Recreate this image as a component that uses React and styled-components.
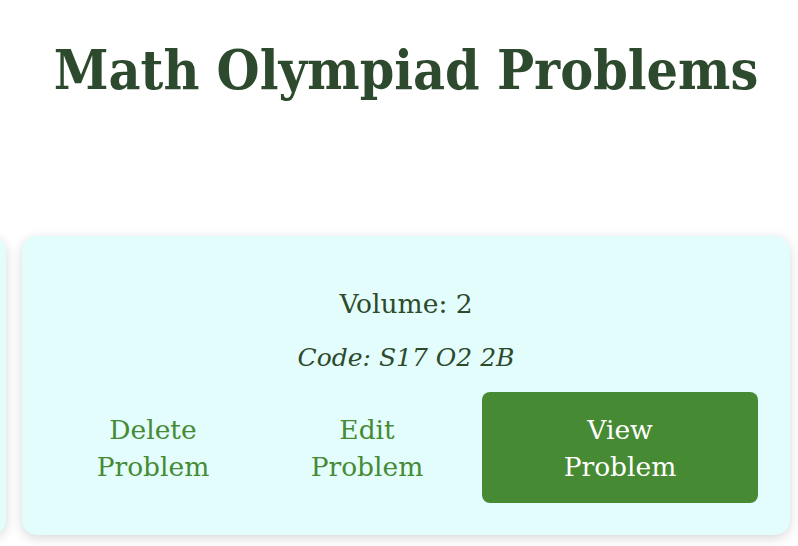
import React from 'react';
import styled, { createGlobalStyle } from 'styled-components';

const GlobalStyle = createGlobalStyle`
  html, body {
    margin: 0;
    padding: 0;
    background: #ffffff;
    overflow: hidden;
  }
  body {
    font-family: "DejaVu Serif", "Liberation Serif", serif;
  }
`;

const Page = styled.div`
  width: 798px;
  height: 546px;
  padding-left: 14px;
  box-sizing: border-box;
  overflow: hidden;
`;

const Title = styled.h1`
  margin: 0;
  padding-top: 38px;
  height: 236px;
  box-sizing: border-box;
  text-align: center;
  font-family: "DejaVu Serif", serif;
  font-stretch: condensed;
  font-weight: 700;
  font-size: 55px;
  line-height: 64px;
  color: #2e4a2e;
  white-space: nowrap;
`;

const Track = styled.div`
  display: flex;
  justify-content: center;
  gap: 16px;
  padding-bottom: 12px;
`;

const Card = styled.div`
  flex: 0 0 768px;
  height: 299px;
  box-sizing: border-box;
  background: #e3fdfd;
  border-radius: 15px;
  box-shadow: 0 3px 12px rgba(0, 0, 0, 0.16);
  padding: 50px 16px 32px;
  display: flex;
  flex-direction: column;
  align-items: center;
  color: #2d4a2d;
`;

const Info = styled.p`
  margin: 0 0 18px;
  font-size: ${p => (p.italic ? '25px' : '26.5px')};
  line-height: 36px;
  font-style: ${p => (p.italic ? 'italic' : 'normal')};
`;

const Actions = styled.div`
  align-self: stretch;
  display: grid;
  grid-template-columns: 198px 198px 1fr;
  gap: 16px;
  padding: 0 16px;
  margin-top: -2px;
`;

const Action = styled.button`
  border: none;
  border-radius: 8px;
  height: 111px;
  padding: 0 16px;
  font-family: "DejaVu Serif", serif;
  font-size: 26.5px;
  line-height: 37px;
  text-align: center;
  cursor: pointer;
  background: ${p => (p.primary ? '#478a34' : 'transparent')};
  color: ${p => (p.primary ? '#ffffff' : '#478a34')};
`;

const problems = [
  { volume: 1, code: 'S17 O1 1A' },
  { volume: 2, code: 'S17 O2 2B' },
  { volume: 3, code: 'S17 O3 3C' },
];

const current = 1;

export default function App() {
  return (
    <Page>
      <GlobalStyle />
      <Title>Math Olympiad Problems</Title>
      <Track>
        {problems.map((p, i) => (
          <Card key={p.code}>
            {i === current && (
              <>
                <Info>Volume: {p.volume}</Info>
                <Info italic>Code: {p.code}</Info>
                <Actions>
                  <Action>Delete<br />Problem</Action>
                  <Action>Edit<br />Problem</Action>
                  <Action primary>View<br />Problem</Action>
                </Actions>
              </>
            )}
          </Card>
        ))}
      </Track>
    </Page>
  );
}
